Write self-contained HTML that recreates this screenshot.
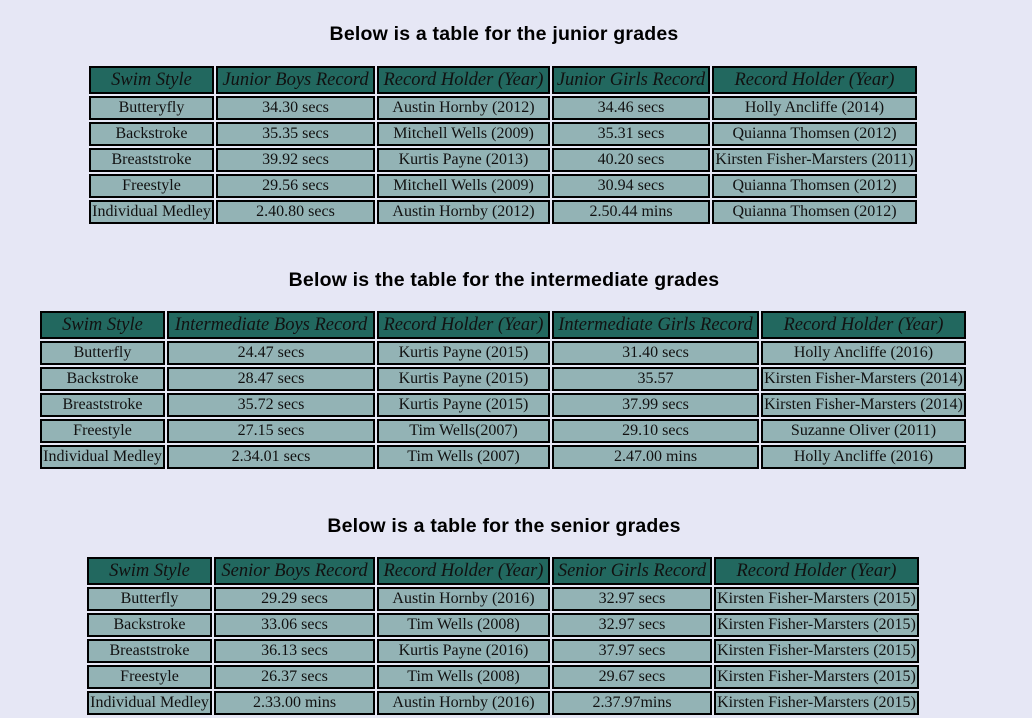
<!DOCTYPE html>
<html><head><meta charset="utf-8"><style>
body{margin:0;background:#e6e7f5;width:1032px;height:718px;overflow:hidden;position:relative;font-family:"Liberation Serif",serif}
h2{position:absolute;left:0;width:1008px;text-align:center;margin:0;font:bold 19.5px "Liberation Sans",sans-serif;color:#000;letter-spacing:0.2px}
table{position:absolute;border-collapse:separate;border-spacing:2px;table-layout:fixed}
td,th{box-sizing:border-box;border:2px solid #000;background:#93b3b5;text-align:center;padding:0;font-size:16px;height:24px;white-space:nowrap;overflow:hidden;color:#111}
th{background:#22685f;font-style:italic;font-weight:normal;font-size:18.5px;height:28px;color:#111}
</style></head><body>
<h2 style="top:23px">Below is a table for the junior grades</h2>
<table style="left:87px;top:64px">
<tr><th style="width:125px">Swim Style</th><th style="width:159px">Junior Boys Record</th><th style="width:173px">Record Holder (Year)</th><th style="width:158px">Junior Girls Record</th><th style="width:205px">Record Holder (Year)</th></tr>
<tr><td>Butteryfly</td><td>34.30 secs</td><td>Austin Hornby (2012)</td><td>34.46 secs</td><td>Holly Ancliffe (2014)</td></tr>
<tr><td>Backstroke</td><td>35.35 secs</td><td>Mitchell Wells (2009)</td><td>35.31 secs</td><td>Quianna Thomsen (2012)</td></tr>
<tr><td>Breaststroke</td><td>39.92 secs</td><td>Kurtis Payne (2013)</td><td>40.20 secs</td><td>Kirsten Fisher-Marsters (2011)</td></tr>
<tr><td>Freestyle</td><td>29.56 secs</td><td>Mitchell Wells (2009)</td><td>30.94 secs</td><td>Quianna Thomsen (2012)</td></tr>
<tr><td>Individual Medley</td><td>2.40.80 secs</td><td>Austin Hornby (2012)</td><td>2.50.44 mins</td><td>Quianna Thomsen (2012)</td></tr>
</table>
<h2 style="top:269px">Below is the table for the intermediate grades</h2>
<table style="left:38px;top:309px">
<tr><th style="width:125px">Swim Style</th><th style="width:208px">Intermediate Boys Record</th><th style="width:173px">Record Holder (Year)</th><th style="width:207px">Intermediate Girls Record</th><th style="width:205px">Record Holder (Year)</th></tr>
<tr><td>Butterfly</td><td>24.47 secs</td><td>Kurtis Payne (2015)</td><td>31.40 secs</td><td>Holly Ancliffe (2016)</td></tr>
<tr><td>Backstroke</td><td>28.47 secs</td><td>Kurtis Payne (2015)</td><td>35.57</td><td>Kirsten Fisher-Marsters (2014)</td></tr>
<tr><td>Breaststroke</td><td>35.72 secs</td><td>Kurtis Payne (2015)</td><td>37.99 secs</td><td>Kirsten Fisher-Marsters (2014)</td></tr>
<tr><td>Freestyle</td><td>27.15 secs</td><td>Tim Wells(2007)</td><td>29.10 secs</td><td>Suzanne Oliver (2011)</td></tr>
<tr><td>Individual Medley</td><td>2.34.01 secs</td><td>Tim Wells (2007)</td><td>2.47.00 mins</td><td>Holly Ancliffe (2016)</td></tr>
</table>
<h2 style="top:515px">Below is a table for the senior grades</h2>
<table style="left:85px;top:555px">
<tr><th style="width:125px">Swim Style</th><th style="width:161px">Senior Boys Record</th><th style="width:173px">Record Holder (Year)</th><th style="width:160px">Senior Girls Record</th><th style="width:205px">Record Holder (Year)</th></tr>
<tr><td>Butterfly</td><td>29.29 secs</td><td>Austin Hornby (2016)</td><td>32.97 secs</td><td>Kirsten Fisher-Marsters (2015)</td></tr>
<tr><td>Backstroke</td><td>33.06 secs</td><td>Tim Wells (2008)</td><td>32.97 secs</td><td>Kirsten Fisher-Marsters (2015)</td></tr>
<tr><td>Breaststroke</td><td>36.13 secs</td><td>Kurtis Payne (2016)</td><td>37.97 secs</td><td>Kirsten Fisher-Marsters (2015)</td></tr>
<tr><td>Freestyle</td><td>26.37 secs</td><td>Tim Wells (2008)</td><td>29.67 secs</td><td>Kirsten Fisher-Marsters (2015)</td></tr>
<tr><td>Individual Medley</td><td>2.33.00 mins</td><td>Austin Hornby (2016)</td><td>2.37.97mins</td><td>Kirsten Fisher-Marsters (2015)</td></tr>
</table>
</body></html>
